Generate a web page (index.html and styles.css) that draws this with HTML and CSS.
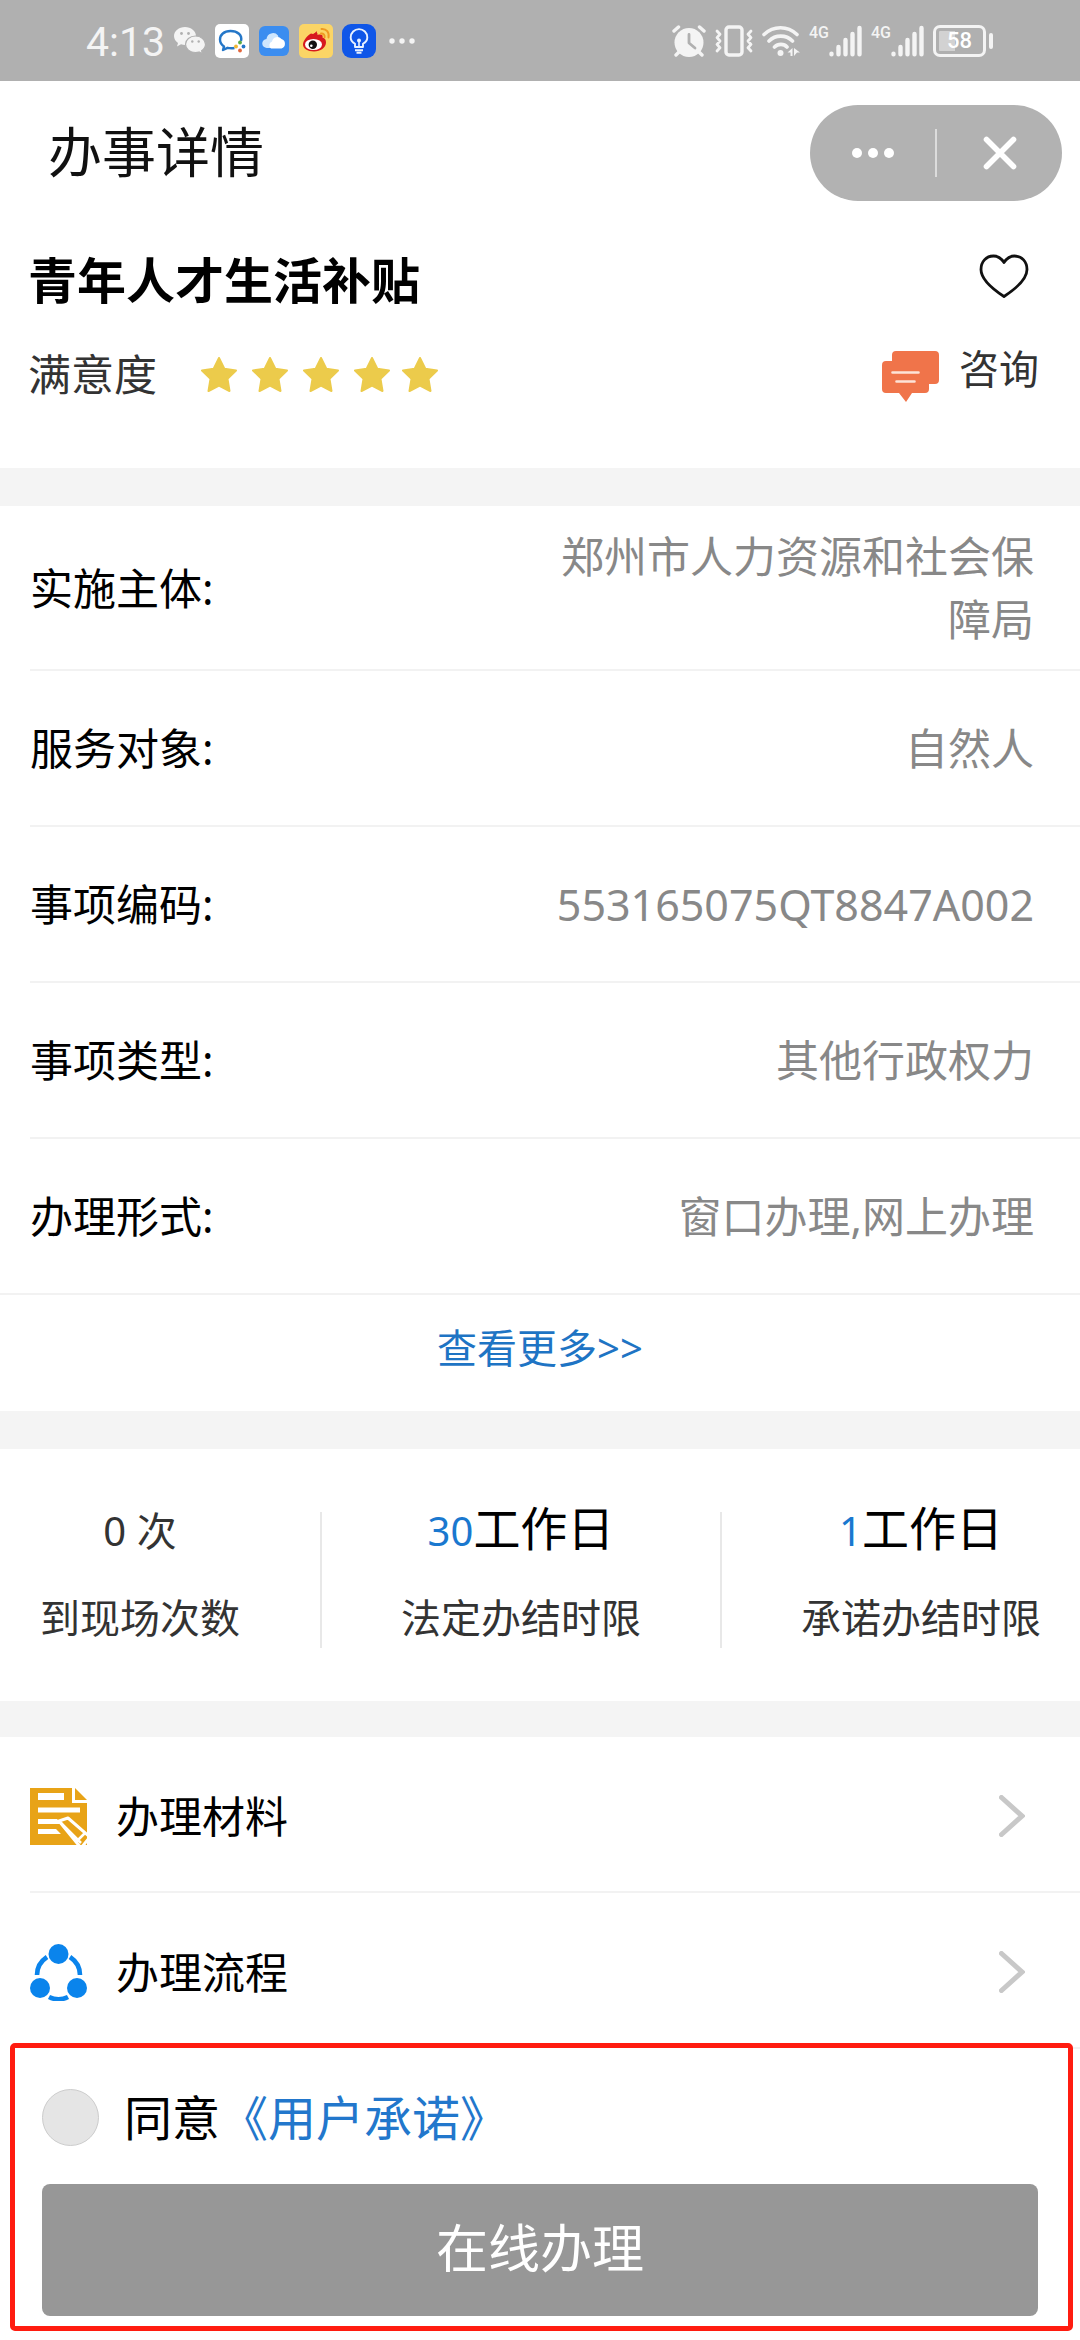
FILE: index.html
```html
<!DOCTYPE html>
<html lang="zh-CN">
<head>
    <meta charset="UTF-8">
    <meta name="viewport" content="width=device-width, initial-scale=1.0">
    <title>办事详情</title>
    <link rel="stylesheet" href="styles.css">
</head>
<body>
    <div class="status-bar">
        <div class="status-left">
            <span class="time">4:13</span>
            <svg class="icon-wechat" width="32" height="28" viewBox="0 0 32 28">
                <path fill="#f4f4f4" d="M11 0C4.900 0 0 4 0 9c0 2.800 1.600 5.300 4 6.900L3 19.500l4-2.200c1.400.4 2.700.6 4 .6C17 18 22 14 22 9S17 0 11 0z"/>
                <path fill="#f4f4f4" stroke="#b0b0b0" stroke-width="1.200" d="M21.500 9C15.900 9 11.500 12.700 11.500 17.300s4.400 8.200 10 8.200c1.200 0 2.400-.2 3.500-.5l3.500 1.900-.9-3.200c2.300-1.500 3.900-3.800 3.900-6.400C31.500 12.700 27 9 21.500 9z"/>
                <circle cx="7.500" cy="6.500" r="1.400" fill="#b0b0b0"/>
                <circle cx="14.500" cy="6.500" r="1.400" fill="#b0b0b0"/>
                <circle cx="18.300" cy="14.500" r="1.200" fill="#b0b0b0"/>
                <circle cx="24.700" cy="14.500" r="1.200" fill="#b0b0b0"/>
            </svg>
            <svg width="34" height="34" viewBox="0 0 34 34">
                <rect width="34" height="34" rx="5" fill="#fff"/>
                <path fill="none" stroke="#2577c8" stroke-width="2.400" stroke-linejoin="round" d="M26 17c1.500-6-3.500-10-10.500-10C9 7 5 10.800 5 15.500c0 3 1.600 5.300 4 6.900l-1 3.600 4.500-2.200c2.500.6 4.500.6 7 .2"/>
                <circle cx="25" cy="18.500" r="1.900" fill="#5aab46"/>
                <circle cx="28.500" cy="22.500" r="1.900" fill="#2577c8"/>
                <circle cx="25" cy="26.500" r="1.900" fill="#e2663c"/>
                <circle cx="21" cy="22.500" r="1.900" fill="#f2b632"/>
            </svg>
            <svg class="icon-cloud" width="30" height="30" viewBox="0 0 30 30">
                <rect width="30" height="30" rx="6" fill="#3b8df0"/>
                <path fill="#cfe6fd" d="M8 22a4.500 4.500 0 0 1-.5-9A6.500 6.500 0 0 1 19 9.500L22 22z"/>
                <path fill="#fff" d="M12 22.500a4 4 0 0 1 1-7 5.500 5.500 0 0 1 9.500-2.500 5 5 0 0 1 0 9.500z"/>
            </svg>
            <svg width="34" height="34" viewBox="0 0 34 34">
                <rect width="34" height="34" rx="5" fill="#fbd566"/>
                <path fill="#d7191f" d="M14 10c3-2.500 5-2 4.500 1 3-1 6-.5 5 2.500 2.500.8 3.500 2.500 3.500 5 0 5-5.500 9-12 9S4 24.500 4 20.500C4 16.500 9 11 12 9.500z"/>
                <path fill="#d7191f" d="M14 11l4-4-.5 5z"/>
                <ellipse cx="14.500" cy="20.500" rx="8.500" ry="5.600" fill="#fff"/>
                <circle cx="13.800" cy="20.800" r="4.200" fill="#111"/>
                <circle cx="12.300" cy="21.800" r="1.300" fill="#fff"/>
                <path fill="none" stroke="#ef9a22" stroke-width="1.900" stroke-linecap="round" d="M22 9.500c2.500-.3 4 1.500 3.600 3.800M22.500 5c5-.5 8 3.500 7 8.500"/>
            </svg>
            <svg class="icon-bulb" width="34" height="34" viewBox="0 0 34 34">
                <rect width="34" height="34" rx="9" fill="#0f56e8"/>
                <path fill="none" stroke="#e8f1ff" stroke-width="1.900" stroke-linejoin="round" d="M13 23v-3.200c-2.800-1.700-4.300-3.700-4.300-6.400a8.300 8.300 0 0 1 16.600 0c0 2.700-1.500 4.700-4.300 6.400V23zM13 26.200h8M14.500 28.800h5"/>
                <path stroke="#e8f1ff" stroke-width="1.600" d="M17 17v6"/>
                <circle cx="17" cy="16.500" r="2" fill="#e8f1ff"/>
            </svg>
            <svg width="26" height="6" viewBox="0 0 26 6" fill="#f4f4f4">
                <circle cx="3" cy="3" r="2.700"/>
                <circle cx="13" cy="3" r="2.700"/>
                <circle cx="23" cy="3" r="2.700"/>
            </svg>
        </div>
        <div class="status-right">
            <svg width="34" height="32" viewBox="0 0 34 32">
                <circle cx="17" cy="17.500" r="14.500" fill="#f4f4f4"/>
                <path stroke="#f4f4f4" stroke-width="3.400" stroke-linecap="round" d="M2 6l4.500-4M32 6l-4.500-4M7 27l-3 3M27 27l3 3"/>
                <path fill="none" stroke="#b0b0b0" stroke-width="2.800" stroke-linecap="round" stroke-linejoin="round" d="M17 9.500v8.500l6 5"/>
            </svg>
            <svg width="38" height="32" viewBox="0 0 38 32" fill="none" stroke="#f4f4f4" stroke-linecap="round" stroke-linejoin="round">
                <rect x="11" y="2" width="16" height="28" rx="3" stroke-width="3.400"/>
                <path stroke-width="2.800" d="M2 6l3 3.300-3 3.300 3 3.400-3 3.400 3 3.300-3 3.300M36 6l-3 3.300 3 3.300-3 3.400 3 3.400-3 3.300 3 3.300"/>
            </svg>
            <svg width="38" height="32" viewBox="0 0 38 32" fill="none" stroke="#f4f4f4" stroke-width="3.600" stroke-linecap="round">
                <path d="M2 9.500c9.500-9 23.500-9 33 0M7 16c6.500-6.500 17-6.500 23.500 0M12.500 22c3.500-3.500 9.500-3.500 12.500 0"/>
                <circle cx="18.500" cy="28" r="3" fill="#f4f4f4" stroke="none"/>
                <path stroke="none" fill="#f4f4f4" d="M30.500 23v8h-2v-3.500h-3zM32 31v-8l6 4.500h-3z"/>
            </svg>
            <span class="signal">
                <span class="net">4G</span>
                <svg width="33" height="32" viewBox="0 0 33 32" stroke="#f4f4f4" stroke-width="4.400" stroke-linecap="round">
                    <path d="M2.500 28.700v.5M9.500 22v7.200M16.500 15v14.200M23.500 9v20.200M30.500 3v26.200"/>
                </svg>
            </span>
            <span class="signal">
                <span class="net">4G</span>
                <svg width="33" height="32" viewBox="0 0 33 32" stroke="#f4f4f4" stroke-width="4.400" stroke-linecap="round">
                    <path d="M2.500 28.700v.5M9.500 22v7.200M16.500 15v14.200M23.500 9v20.200M30.500 3v26.200"/>
                </svg>
            </span>
            <span class="battery"><span class="battery-level">58</span></span>
        </div>
    </div>

    <header class="header">
        <h1>办事详情</h1>
        <div class="capsule">
            <button type="button" class="capsule-btn" aria-label="更多">
                <svg width="42" height="10" viewBox="0 0 42 10" fill="#fff">
                    <circle cx="5" cy="5" r="5"/>
                    <circle cx="21" cy="5" r="5"/>
                    <circle cx="37" cy="5" r="5"/>
                </svg>
            </button>
            <span class="capsule-line"></span>
            <button type="button" class="capsule-btn" aria-label="关闭">
                <svg width="34" height="34" viewBox="0 0 34 34" stroke="#fff" stroke-width="5.600" stroke-linecap="round">
                    <path d="M3.500 3.500l27 27M30.500 3.500l-27 27"/>
                </svg>
            </button>
        </div>
    </header>

    <section class="summary">
        <div class="summary-row">
            <h2>青年人才生活补贴</h2>
            <button type="button" class="like-btn" aria-label="收藏">
                <svg width="50" height="44" viewBox="0 0 50 44">
                    <path fill="none" stroke="#111" stroke-width="2.800" stroke-linejoin="round" d="M25 8.500C22 4 18.500 2 14.500 2 7 2 2 8 2 15.500 2 25 12 34 25 42.500 38 34 48 25 48 15.500 48 8 43 2 35.500 2 31.500 2 28 4 25 8.500z"/>
                </svg>
            </button>
        </div>
        <div class="summary-row">
            <div class="rating">
                <span class="rating-label">满意度</span>
                <svg class="stars" width="237" height="36" viewBox="0 0 237 36" fill="#eccb4b">
                    <defs>
                        <path id="star" stroke="#eccb4b" stroke-width="2" stroke-linejoin="round" d="M18 1l5.300 10.800 11.700 1.700-8.500 8.300 2 12.200L18 28.500 7.500 34l2-12.200L1 13.500l11.700-1.700z"/>
                    </defs>
                    <use href="#star"/>
                    <use href="#star" x="51"/>
                    <use href="#star" x="102"/>
                    <use href="#star" x="153"/>
                    <use href="#star" x="201"/>
                </svg>
            </div>
            <a class="consult" href="#">
                <svg width="57" height="52" viewBox="0 0 57 52">
                    <path fill="#f0744a" d="M14 0h39a4 4 0 0 1 4 4v25a4 4 0 0 1-4 4h-6v5a4 4 0 0 1-4 4H30l-6 9-7-9H4a4 4 0 0 1-4-4V14a4 4 0 0 1 4-4h6V4a4 4 0 0 1 4-4z"/>
                    <path stroke="#fde3d8" stroke-width="2.600" stroke-linecap="round" d="M10.500 21.500h26M14.500 30.500h18"/>
                </svg>
                咨询
            </a>
        </div>
    </section>

    <section class="details">
        <dl>
            <div class="detail-row">
                <dt>实施主体:</dt>
                <dd>郑州市人力资源和社会保障局</dd>
            </div>
            <div class="detail-row">
                <dt>服务对象:</dt>
                <dd>自然人</dd>
            </div>
            <div class="detail-row">
                <dt>事项编码:</dt>
                <dd>553165075QT8847A002</dd>
            </div>
            <div class="detail-row">
                <dt>事项类型:</dt>
                <dd>其他行政权力</dd>
            </div>
            <div class="detail-row">
                <dt>办理形式:</dt>
                <dd>窗口办理,网上办理</dd>
            </div>
        </dl>
        <a class="more" href="#">查看更多&gt;&gt;</a>
    </section>

    <section class="stats">
        <div class="stat">
            <p class="stat-value">0 次</p>
            <p class="stat-label">到现场次数</p>
        </div>
        <div class="stat">
            <p class="stat-value"><span class="num">30</span><span class="unit">工作日</span></p>
            <p class="stat-label">法定办结时限</p>
        </div>
        <div class="stat">
            <p class="stat-value"><span class="num">1</span><span class="unit">工作日</span></p>
            <p class="stat-label">承诺办结时限</p>
        </div>
    </section>

    <nav class="links">
        <a class="link-row" href="#">
            <svg width="57" height="57" viewBox="0 0 57 57">
                <path fill="#e8a317" d="M0 0h42v15h15v42H0z"/>
                <path fill="#e8a317" d="M45 0l12 12H45z"/>
                <path fill="#fff" d="M8 5h26v7H8zM8 19.500h42v5H8zM8 31h19l5 5H8zM8 41h18l5 5H8z"/>
                <path fill="#e8a317" stroke="#fff" stroke-width="3" stroke-linejoin="round" d="M29 33l9-3 22 19-9 11z"/>
                <path stroke="#fff" stroke-width="2.500" d="M29 33l22 22M46 54l9-9"/>
            </svg>
            <span class="link-text">办理材料</span>
            <svg width="26" height="42" viewBox="0 0 26 42">
                <path fill="none" stroke="#c8c8c8" stroke-width="5" stroke-linecap="round" d="M2.500 2.500L23 21 2.500 39.500"/>
            </svg>
        </a>
        <a class="link-row" href="#">
            <svg width="57" height="57" viewBox="0 0 57 57">
                <path fill="none" stroke="#0a84ec" stroke-width="4.600" d="M7 31c0-9 4-14 10-18M50 31c0-9-4-14-10-18M19 53c6 3 13 3 19 0"/>
                <circle cx="28.500" cy="10" r="10" fill="#0a84ec"/>
                <circle cx="10" cy="44" r="10" fill="#0a84ec"/>
                <circle cx="47" cy="44" r="10" fill="#0a84ec"/>
            </svg>
            <span class="link-text">办理流程</span>
            <svg width="26" height="42" viewBox="0 0 26 42">
                <path fill="none" stroke="#c8c8c8" stroke-width="5" stroke-linecap="round" d="M2.500 2.500L23 21 2.500 39.500"/>
            </svg>
        </a>
    </nav>

    <form class="apply">
        <div class="agree">
            <input type="checkbox" id="agree">
            <label for="agree">同意</label>
            <a href="#">《用户承诺》</a>
        </div>
        <button type="button" class="apply-btn">在线办理</button>
    </form>
</body>
</html>
```

FILE: styles.css
```css
* {
    box-sizing: border-box;
    margin: 0;
    padding: 0;
}

body {
    background: #fff;
    color: #000;
    font-family: "Noto Sans", "Noto Sans CJK SC", sans-serif;
    font-size: 43px;
    line-height: 63px;
}

a {
    text-decoration: none;
}

button {
    border: none;
    background: none;
    font-family: inherit;
    cursor: pointer;
}

svg {
    display: block;
    flex: none;
}

/* status bar */
.status-bar {
    display: flex;
    justify-content: space-between;
    height: 81px;
    padding: 0 87px 0 86px;
    background: #b0b0b0;
    color: #f4f4f4;
}

.status-left,
.status-right {
    display: flex;
    align-items: center;
    gap: 9px;
}

.time {
    font-family: Roboto, sans-serif;
    font-size: 41px;
    margin-top: 4px;
}

.icon-cloud {
    margin: 0 1px;
}

.icon-bulb {
    margin-right: 4px;
}

.signal {
    display: flex;
    align-items: flex-start;
}

.net {
    font-family: Roboto, sans-serif;
    font-size: 16px;
    font-weight: 500;
    line-height: 16px;
}

.battery {
    display: flex;
    align-items: center;
}

.battery::after {
    content: "";
    width: 4px;
    height: 16px;
    margin-left: 3px;
    border-radius: 2px;
    background: #f4f4f4;
}

.battery-level {
    width: 53px;
    height: 32px;
    border: 3px solid #f4f4f4;
    border-radius: 7px;
    background: linear-gradient(90deg, #d2d2d2 40%, transparent 40%) content-box;
    padding: 3px;
    color: #fff;
    font-family: Roboto, sans-serif;
    font-size: 22px;
    font-weight: 500;
    line-height: 20px;
    text-align: center;
}

/* page header */
.header {
    display: flex;
    justify-content: space-between;
    align-items: center;
    height: 143px;
    padding: 0 18px 0 48px;
}

h1 {
    color: #111;
    font-size: 54px;
    font-weight: 400;
}

.capsule {
    display: flex;
    align-items: center;
    width: 252px;
    height: 96px;
    border-radius: 48px;
    background: #b2b2b2;
}

.capsule-btn {
    display: flex;
    flex: 1;
    height: 96px;
    align-items: center;
    justify-content: center;
}

.capsule-line {
    width: 2px;
    height: 48px;
    background: #dcdcdc;
}

/* summary */
.summary {
    display: flex;
    flex-direction: column;
    gap: 35px;
    padding: 26px 41px 63px 28px;
}

.summary-row {
    display: flex;
    justify-content: space-between;
    align-items: flex-start;
    height: 60px;
}

h2 {
    font-size: 49px;
    line-height: 60px;
}

.like-btn {
    padding: 4px 10px;
}

.rating {
    display: flex;
    align-items: center;
    gap: 44px;
    color: #333;
    line-height: 60px;
}

.consult {
    display: flex;
    align-items: flex-start;
    gap: 20px;
    color: #333;
    font-size: 40px;
    line-height: 48px;
}

.consult svg {
    margin-top: 6px;
}

/* details */
.details,
.stats,
.links {
    border-top: 38px solid #f4f4f4;
}

.detail-row {
    display: flex;
    justify-content: space-between;
    align-items: center;
    min-height: 156px;
    margin-left: 30px;
    padding: 19px 46px 18px 0;
    border-bottom: 2px solid #f2f2f2;
}

.detail-row:last-child {
    margin-left: 0;
    padding-left: 30px;
}

dd {
    width: 480px;
    color: #888;
    text-align: right;
}

.more {
    display: block;
    padding: 21px 0 32px;
    color: #1e74c4;
    font-size: 40px;
    text-align: center;
}

/* stats */
.stats {
    display: grid;
    grid-template-columns: 8fr 10fr 9fr;
    padding: 63px 0 53px;
}

.stat {
    height: 136px;
    color: #333;
    font-size: 40px;
    text-align: center;
}

.stat + .stat {
    border-left: 2px solid #e8e8e8;
}

.stat:first-child {
    padding-right: 40px;
}

.stat:last-child {
    padding-left: 40px;
}

.stat-value {
    height: 48px;
    margin-bottom: 34px;
    line-height: 38px;
}

.stat-label {
    line-height: 48px;
}

.num {
    color: #1a78cf;
}

.unit {
    color: #000;
    font-size: 47px;
    line-height: 24px;
}

/* links */
.links {
    border-top-width: 36px;
}

.link-row {
    display: flex;
    align-items: center;
    gap: 29px;
    height: 156px;
    margin-left: 30px;
    padding: 4px 55px 0 0;
    border-bottom: 2px solid #f2f2f2;
    color: #000;
}

.link-text {
    flex: 1;
}

/* apply form, its frame covers the last divider */
.apply {
    position: relative;
    margin: -6px 7px 9px 10px;
    padding: 39px 30px 10px 27px;
    border: 5px solid #ff1c10;
    border-radius: 5px;
    background: #fff;
}

.agree {
    display: flex;
    align-items: center;
    height: 60px;
    margin-bottom: 37px;
    font-size: 48px;
}

.agree input {
    appearance: none;
    width: 57px;
    height: 57px;
    margin-right: 25px;
    border: 1px solid #ccc;
    border-radius: 50%;
    background: #e5e5e5;
}

.agree input:checked {
    background: #1e74c4;
}

.agree a {
    color: #2277cc;
}

.apply-btn {
    display: block;
    width: 100%;
    height: 132px;
    padding-bottom: 10px;
    border-radius: 8px;
    background: #979797;
    color: #fff;
    font-size: 52px;
}
```
